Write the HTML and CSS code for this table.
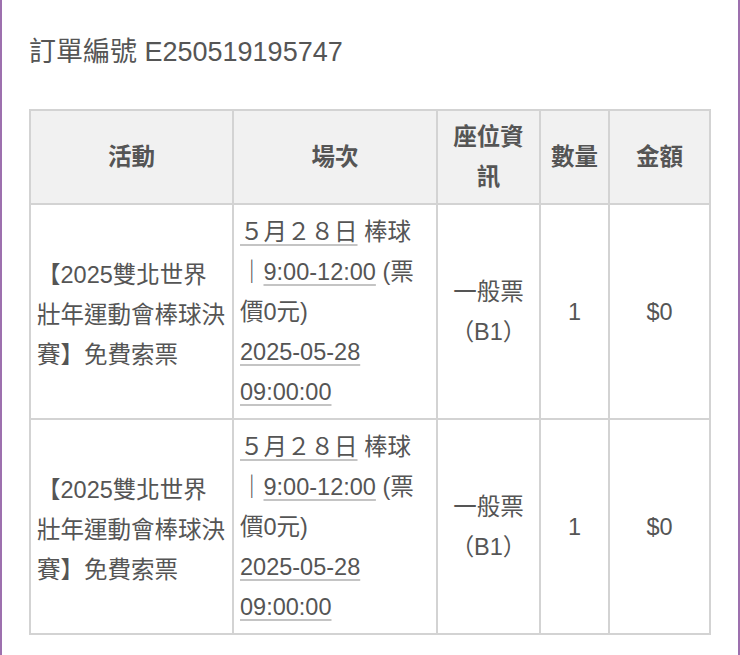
FILE: index.html
```html
<!DOCTYPE html>
<html lang="zh-Hant">
<head>
<meta charset="utf-8">
<title>訂單</title>
<link rel="stylesheet" href="styles.css">
</head>
<body>
<div class="page">
  <h1 class="order-title">訂單編號 E250519195747</h1>
  <table class="order-table">
    <colgroup>
      <col class="c-event">
      <col class="c-session">
      <col class="c-seat">
      <col class="c-qty">
      <col class="c-amount">
    </colgroup>
    <thead>
      <tr>
        <th>活動</th>
        <th>場次</th>
        <th>座位資訊</th>
        <th>數量</th>
        <th>金額</th>
      </tr>
    </thead>
    <tbody>
      <tr>
        <td class="event">【2025雙北世界壯年運動會棒球決賽】免費索票</td>
        <td class="session"><span class="u">５月２８日</span> 棒球｜<span class="u nw">9:00-12:00</span> (票價0元) <span class="u"><span class="nw">2025-05-28</span> <span class="nw">09:00:00</span></span></td>
        <td class="center">一般票（B1）</td>
        <td class="center">1</td>
        <td class="center">$0</td>
      </tr>
      <tr>
        <td class="event">【2025雙北世界壯年運動會棒球決賽】免費索票</td>
        <td class="session"><span class="u">５月２８日</span> 棒球｜<span class="u nw">9:00-12:00</span> (票價0元) <span class="u"><span class="nw">2025-05-28</span> <span class="nw">09:00:00</span></span></td>
        <td class="center">一般票（B1）</td>
        <td class="center">1</td>
        <td class="center">$0</td>
      </tr>
    </tbody>
  </table>
</div>
</body>
</html>
```

FILE: styles.css
```css
html, body {
  margin: 0;
  padding: 0;
  background: #ffffff;
}

body {
  font-family: "Liberation Sans", "Noto Sans CJK TC", sans-serif;
  color: #555555;
}

.page {
  box-sizing: border-box;
  width: 740px;
  min-height: 655px;
  border-left: 2px solid #9d70ae;
  border-right: 2px solid #9d70ae;
  padding: 33px 27px 20px 27px;
}

.order-title {
  margin: 0 0 38px 0;
  font-size: 27px;
  line-height: 38px;
  font-weight: normal;
  color: #555555;
}

.order-table {
  width: 682px;
  table-layout: fixed;
  border-collapse: collapse;
  border: 2px solid #d3d3d3;
  font-size: 23.5px;
  line-height: 40px;
}

.c-event { width: 203px; }
.c-session { width: 204px; }
.c-seat { width: 103px; }
.c-qty { width: 69px; }
.c-amount { width: 101px; }

.order-table th,
.order-table td {
  border: 2px solid #d3d3d3;
  padding: 6px 6px;
  vertical-align: middle;
}

.order-table th {
  background: #f1f1f1;
  font-weight: bold;
  text-align: center;
  color: #555555;
  line-height: 40px;
}

.order-table td {
  padding-top: 7px;
  padding-bottom: 6px;
}

.order-table td.event {
  text-align: left;
  padding-top: 12px;
}

.session {
  text-align: left;
  vertical-align: top;
}

.center {
  text-align: center;
}

.u {
  text-decoration: underline;
  text-decoration-color: #c4c4c4;
  text-decoration-thickness: 2px;
  text-underline-offset: 4px;
}

.nw {
  white-space: nowrap;
}
```
